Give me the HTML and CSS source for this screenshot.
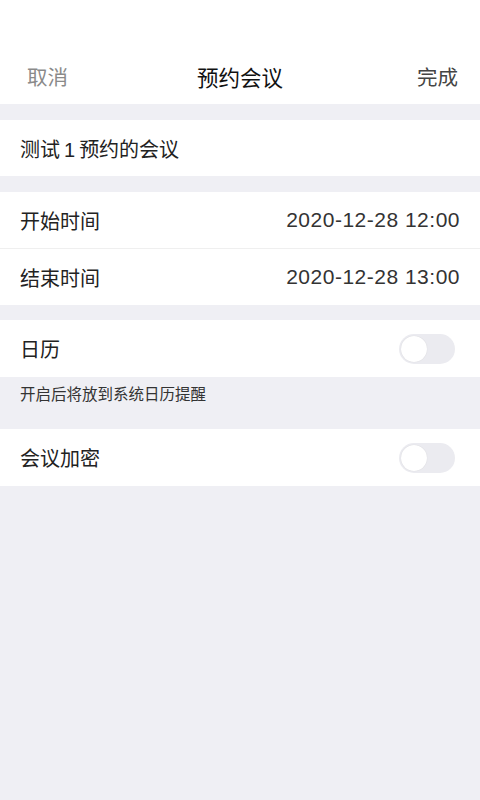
FILE: index.html
```html
<!DOCTYPE html>
<html>
<head>
    <meta name="viewport" content="width=device-width, initial-scale=1.0">
    <title>预约会议</title>
    <link rel="stylesheet" href="styles.css">
</head>
<body>
    <!-- Top bar -->
    <header class="topbar">
        <div class="nav">
            <span class="nav-cancel">取消</span>
            <span class="nav-title">预约会议</span>
            <span class="nav-done">完成</span>
        </div>
    </header>

    <div class="group">
        <div class="row">
            <span class="label">测试<span class="num">1</span>预约的会议</span>
        </div>
    </div>

    <div class="group">
        <div class="row line">
            <span class="label">开始时间</span>
            <span class="value">2020-12-28 12:00</span>
        </div>
        <div class="row">
            <span class="label">结束时间</span>
            <span class="value">2020-12-28 13:00</span>
        </div>
    </div>

    <div class="group narrow">
        <div class="row tall">
            <span class="label">日历</span>
            <span class="switch"><span class="knob"></span></span>
        </div>
    </div>
    <p class="tip">开启后将放到系统日历提醒</p>

    <div class="group flush">
        <div class="row tall">
            <span class="label">会议加密</span>
            <span class="switch"><span class="knob"></span></span>
        </div>
    </div>
</body>
</html>
```

FILE: styles.css
```css
body {
    margin: 0;
    min-height: 800px;
    background-color: #efeff4;
    font-family: "Noto Sans CJK SC", "Noto Sans", sans-serif;
    color: #222;
}

/* Top bar */
.topbar {
    background-color: white;
    padding-top: 48px;
}

.nav {
    height: 56px;
    display: flex;
    align-items: center;
    justify-content: space-between;
    padding: 0 22px 0 27px;
    font-size: 20.5px;
    position: relative;
}

.nav-cancel {
    color: #8a8a8a;
}

.nav-title {
    color: #111;
    font-size: 21.5px;
    position: absolute;
    left: 0;
    right: 0;
    text-align: center;
    pointer-events: none;
}

.nav-done {
    color: #444;
}

/* Groups of rows */
.group {
    background-color: white;
    margin-top: 16px;
}

.group.narrow {
    margin-top: 15px;
}

.group.flush {
    margin-top: 0;
}

.row {
    height: 56px;
    display: flex;
    align-items: center;
    justify-content: space-between;
    padding: 0 20px;
    font-size: 20px;
}

.row.tall {
    height: 57px;
    padding-right: 25px;
}

.row.line {
    border-bottom: 1px solid #efefef;
}

.num {
    font-family: "Liberation Sans", sans-serif;
    margin: 0 4px;
}

.value {
    color: #333;
    font-family: "Liberation Sans", sans-serif;
    font-size: 21px;
    letter-spacing: 0.5px;
}

.tip {
    margin: 0;
    height: 52px;
    padding: 5px 20px 0;
    box-sizing: border-box;
    font-size: 15.5px;
    color: #333;
}

/* Switch */
.switch {
    width: 56px;
    height: 30px;
    border-radius: 15px;
    background-color: #ebebf0;
    display: flex;
    align-items: center;
    padding: 0 2px;
    box-sizing: border-box;
}

.knob {
    width: 26px;
    height: 26px;
    border-radius: 50%;
    background-color: white;
    box-shadow: 0 0 1px rgba(0, 0, 0, 0.15);
}
```
